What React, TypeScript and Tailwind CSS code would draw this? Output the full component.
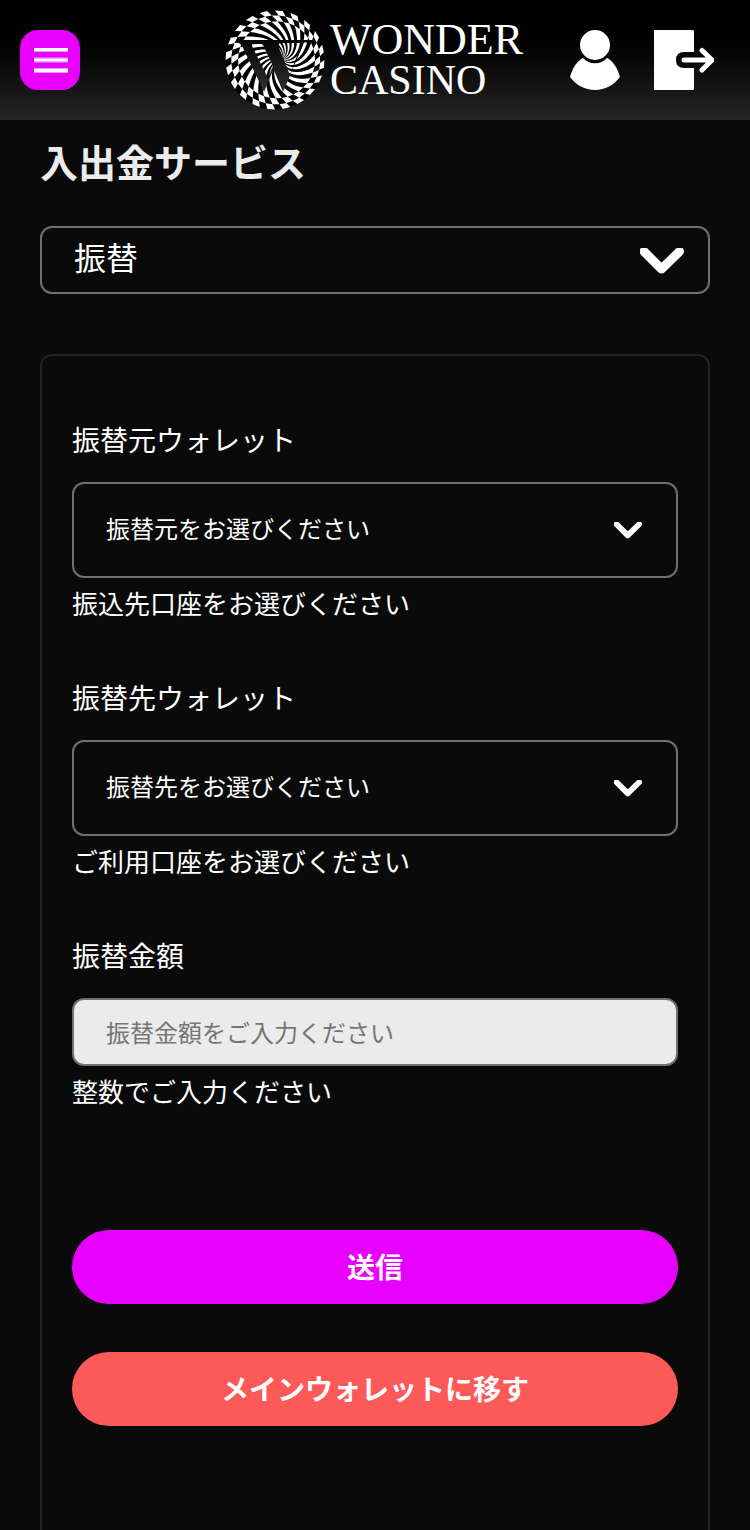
import React from "react";

const JP = "font-['Noto_Sans_CJK_JP',sans-serif]";

const STRIPES = 20;
const RADIUS = 49.5;

function swirlPoint(theta: number, radius: number): string {
  const depth = 1 - radius / RADIUS;
  const angle = theta + 0.6 * depth + 0.9 * depth * depth;
  const cx = 50 + 7 * depth;
  const cy = 50 - 1 * depth;
  return `${(cx + radius * Math.cos(angle)).toFixed(2)} ${(cy + radius * Math.sin(angle)).toFixed(2)}`;
}

function swirlCell(index: number, outer: number, inner: number, shifted: boolean): string {
  const step = (Math.PI * 2) / STRIPES;
  const start = index * step + (shifted ? step / 2 : 0);
  const end = start + step / 2;
  const count = 12;
  const points: string[] = [];
  for (let i = 0; i <= count; i++) points.push(swirlPoint(start, outer + ((inner - outer) * i) / count));
  for (let i = count; i >= 0; i--) points.push(swirlPoint(end, outer + ((inner - outer) * i) / count));
  return `M${points.join("L")}Z`;
}

const SWIRL = Array.from({ length: STRIPES }, (_, i) =>
  [swirlCell(i, 49.5, 44.5, false), swirlCell(i, 44.5, 38.5, true), swirlCell(i, 38.5, 2, false)].join("")
).join("");

function Emblem() {
  return (
    <svg viewBox="0 0 100 100" className="size-25 shrink-0" aria-hidden="true">
      <defs>
        <linearGradient id="emblem-shade" x1="0" y1="30" x2="0" y2="82" gradientUnits="userSpaceOnUse">
          <stop offset="0" stopColor="#050505" />
          <stop offset="1" stopColor="#303030" />
        </linearGradient>
      </defs>
      <circle cx="50" cy="50" r={RADIUS} fill="#000" />
      <path d={SWIRL} fill="#fff" />
      <path
        d="M12 30H89V32.5H79L58 82L48.500 59L39 82L18 38Q16 33 12 32.5ZM28 33Q26 34 28 38L43 68L48 56L39 37Q37 33 34 33ZM55 33Q53 34 54 38L65 65L76.500 33Z"
        fill="url(#emblem-shade)"
        fillRule="evenodd"
      />
    </svg>
  );
}

function Chevron({ className }: { className: string }) {
  return (
    <svg viewBox="0 0 44 26" className={className} fill="none" stroke="#fff" strokeWidth="9" strokeLinecap="round" strokeLinejoin="round" aria-hidden="true">
      <path d="M4 3.500L21.500 21L39.500 3.500" />
    </svg>
  );
}

function Header() {
  return (
    <header className="grid h-30 grid-cols-[1fr_auto_1fr] items-center bg-linear-to-b from-black to-[#252525]">
      <div className="pl-5">
        <button type="button" aria-label="メニュー" className="flex size-15 items-center justify-center rounded-[18px] bg-[#e800ff]">
          <svg viewBox="0 0 36 26" className="w-9" aria-hidden="true">
            <path d="M2 1H36V4H2ZM2 11.500H36V14.500H2ZM2 22H36V25H2Z" fill="#fff" />
            <path d="M2 4H36V5H2ZM2 10.500H36V11.500H2ZM2 14.500H36V15.500H2ZM2 21H36V22H2ZM2 25H36V26H2Z" fill="#fff" opacity=".6" />
          </svg>
        </button>
      </div>
      <a href="#" className="flex w-75 items-center gap-[5px] font-['Liberation_Serif',serif] leading-10 text-white">
        <Emblem />
        <span className="flex flex-col whitespace-nowrap">
          <span className="text-[44px] leading-10">WONDER</span>
          <span className="text-[42px] leading-10">CASINO</span>
        </span>
      </a>
      <nav className="flex justify-end gap-[34px] pr-9">
        <a href="#" aria-label="マイページ">
          <svg viewBox="0 0 50 60" className="h-15" aria-hidden="true">
            <path d="M13 28C19 35 31 35 37 28C43 31 47.500 38 50 47C44 55 35 60 25 60S6 55 0 47C2.500 38 7 31 13 28Z" fill="#fff" />
            <circle cx="25" cy="15" r="15" fill="#fff" />
          </svg>
        </a>
        <a href="#" aria-label="ログアウト">
          <svg viewBox="0 0 60 60" className="size-15" aria-hidden="true">
            <path d="M0 0H38.500Q40 0 40 1.500V22H30Q22 22 22 30T30 38H40V58.500Q40 60 38.500 60H0Z" fill="#fff" />
            <path d="M30 30H57M48 20.500L58 30L48 40" fill="none" stroke="#fff" strokeWidth="5" strokeLinecap="round" strokeLinejoin="round" />
          </svg>
        </a>
      </nav>
    </header>
  );
}

function WalletSelect({ id, label, prompt, hint }: { id: string; label: string; prompt: string; hint: string }) {
  return (
    <div className="mb-[54px]">
      <label htmlFor={id} className="mb-[23px] block text-[28px] leading-10">
        {label}
      </label>
      <div className="relative">
        <select id={id} className="block h-24 w-full appearance-none rounded-xl border-2 border-[#707070] bg-[#0a0a0a] px-8 pb-1 text-2xl text-white">
          <option>{prompt}</option>
        </select>
        <Chevron className="pointer-events-none absolute top-10 right-9 w-7" />
      </div>
      <p className="mt-[5px] text-[26px] leading-10">{hint}</p>
    </div>
  );
}

export default function App() {
  return (
    <div lang="ja" className={`${JP} flex min-h-screen flex-col bg-[#0a0a0a] text-white`}>
      <Header />
      <main className="flex flex-1 flex-col px-10">
        <h1 className="mt-[13px] mb-[37px] text-[38px] leading-14 font-bold text-[#ebebeb]">入出金サービス</h1>
        <div className="relative mb-15">
          <select aria-label="サービス" className="block h-17 w-full appearance-none rounded-xl border-2 border-[#707070] bg-[#0a0a0a] px-8 pb-2 text-[32px] leading-12 text-white">
            <option>振替</option>
          </select>
          <Chevron className="pointer-events-none absolute top-[22px] right-[26px] w-11" />
        </div>
        <form className="flex-1 rounded-t-xl border-2 border-b-0 border-[#222] px-[30px] pt-[63px] pb-25" onSubmit={(e) => e.preventDefault()}>
          <WalletSelect id="from" label="振替元ウォレット" prompt="振替元をお選びください" hint="振込先口座をお選びください" />
          <WalletSelect id="to" label="振替先ウォレット" prompt="振替先をお選びください" hint="ご利用口座をお選びください" />
          <label htmlFor="amount" className="mb-[23px] block text-[28px] leading-10">
            振替金額
          </label>
          <input
            id="amount"
            type="text"
            inputMode="numeric"
            placeholder="振替金額をご入力ください"
            className="block h-17 w-full rounded-xl border-2 border-[#707070] bg-[#ebebeb] px-8 pb-0.5 text-2xl text-black placeholder:text-[#757575]"
          />
          <p className="mt-[5px] text-[26px] leading-10">整数でご入力ください</p>
          <div className="mt-[119px] flex flex-col gap-12 text-[28px] leading-10 font-bold">
            <button type="submit" className="h-[74px] rounded-full bg-[#e800ff] pb-0.5">
              送信
            </button>
            <button type="button" className="h-[74px] rounded-full bg-[#fc5a58] pb-0.5">
              メインウォレットに移す
            </button>
          </div>
        </form>
      </main>
    </div>
  );
}
